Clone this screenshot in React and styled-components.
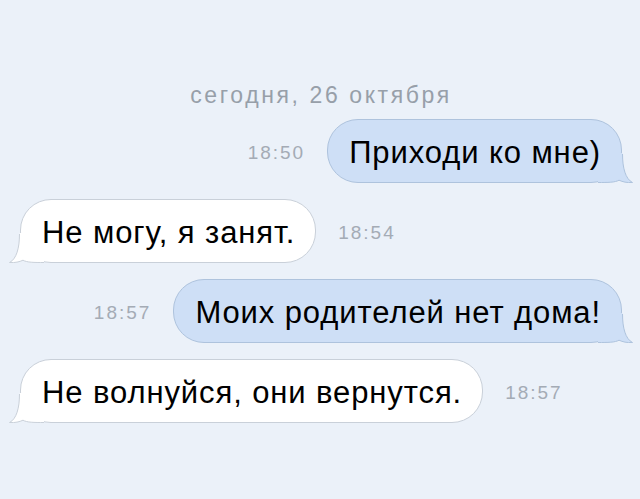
import React from "react";
import styled, { createGlobalStyle } from "styled-components";

const GlobalStyle = createGlobalStyle`
  html, body {
    margin: 0;
    padding: 0;
    background: #ebf1f9;
  }
  body {
    font-family: "Liberation Sans", Arial, sans-serif;
  }
`;

const Page = styled.div`
  width: 640px;
  height: 499px;
  box-sizing: border-box;
  padding: 82px 18px 0 20px;
  display: flex;
  flex-direction: column;
  background: #ebf1f9;
  overflow: hidden;
`;

const DateLine = styled.div`
  height: 26px;
  line-height: 26px;
  margin-bottom: 11px;
  text-align: center;
  font-size: 23px;
  letter-spacing: 2.6px;
  color: #979fa9;
`;

const Thread = styled.div`
  display: flex;
  flex-direction: column;
  gap: 16px;
`;

const Row = styled.div`
  display: flex;
  align-items: center;
  gap: 22px;
  justify-content: ${(p) => (p.$out ? "flex-end" : "flex-start")};
`;

const Time = styled.span`
  font-size: 19px;
  letter-spacing: 2px;
  color: #a4abb5;
  margin-top: 3px;
`;

const Bubble = styled.div`
  position: relative;
  box-sizing: border-box;
  height: 64px;
  display: flex;
  align-items: center;
  padding: 3px 20px 0 21px;
  border-radius: 31px;
  border: 1px solid ${(p) => (p.$out ? "#aec3dd" : "#c9d0d9")};
  background: ${(p) => (p.$out ? "#cedff6" : "#ffffff")};
`;

const BubbleText = styled.span`
  position: relative;
  z-index: 1;
  font-size: 31px;
  letter-spacing: 0.9px;
  color: #000;
  white-space: nowrap;
`;

const TailSvg = styled.svg`
  position: absolute;
  bottom: -1px;
  width: 46px;
  height: 30px;
  ${(p) =>
    p.$out
      ? "right: -13px;"
      : "left: -13px; transform: scaleX(-1);"}
`;

function Tail({ out }) {
  const fill = out ? "#cedff6" : "#ffffff";
  const stroke = out ? "#aec3dd" : "#c9d0d9";
  const outline =
    "M34.5 1 C34.5 15, 37.5 26, 44.5 29.5 C39 30, 34.5 28.8, 31 27.2 C27 29.5, 20 29.5, 10 29.5";
  return (
    <TailSvg $out={out} viewBox="0 0 46 30">
      <path d={outline + " L10 0 L34 0 Z"} fill={fill} />
      <path d={outline} fill="none" stroke={stroke} strokeWidth="1" />
    </TailSvg>
  );
}

const messages = [
  { out: true, text: "Приходи ко мне)", time: "18:50" },
  { out: false, text: "Не могу, я занят.", time: "18:54" },
  { out: true, text: "Моих родителей нет дома!", time: "18:57" },
  { out: false, text: "Не волнуйся, они вернутся.", time: "18:57" },
];

export default function App() {
  return (
    <Page>
      <GlobalStyle />
      <DateLine>сегодня, 26 октября</DateLine>
      <Thread>
        {messages.map((m, i) => (
          <Row key={i} $out={m.out}>
            {m.out && <Time>{m.time}</Time>}
            <Bubble $out={m.out}>
              <Tail out={m.out} />
              <BubbleText>{m.text}</BubbleText>
            </Bubble>
            {!m.out && <Time>{m.time}</Time>}
          </Row>
        ))}
      </Thread>
    </Page>
  );
}
